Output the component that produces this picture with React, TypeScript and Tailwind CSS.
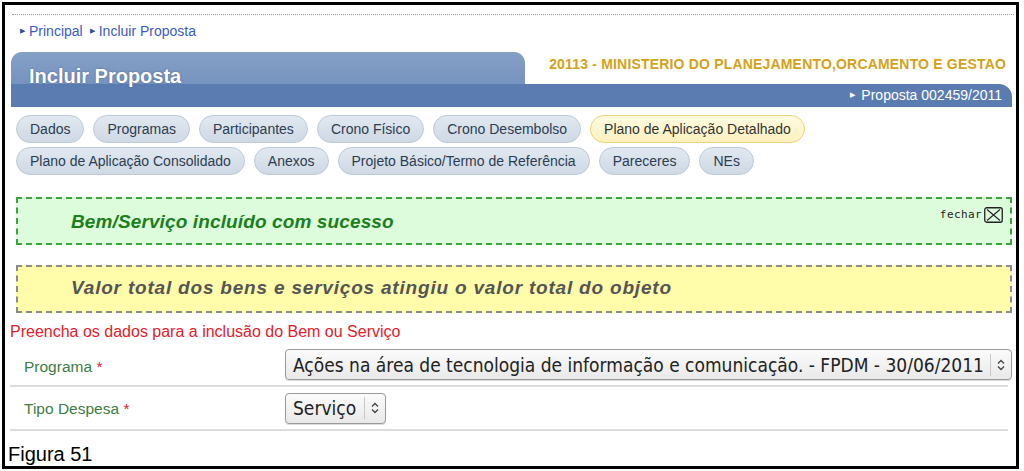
import React from "react";

const tabs1 = ["Dados", "Programas", "Participantes", "Crono Físico", "Crono Desembolso"];
const tabs2 = ["Plano de Aplicação Consolidado", "Anexos", "Projeto Básico/Termo de Referência", "Pareceres", "NEs"];

function Pill({ label, active = false }: { label: string; active?: boolean }) {
  return (
    <div
      className={
        "h-[28px] px-[13px] flex items-center rounded-full border text-[14px] whitespace-nowrap " +
        (active
          ? "bg-[linear-gradient(to_bottom,#fffbe0,#fdf1c0)] border-[#ecd27a] text-[#333]"
          : "bg-[linear-gradient(to_bottom,#e1e8f0,#cfd9e4)] border-[#bccad8] text-[#2b3d52]")
      }
    >
      {label}
    </div>
  );
}

function Arrows() {
  return (
    <svg width="10" height="14" viewBox="0 0 10 14" className="shrink-0">
      <path d="M2 5.5 L5 2.5 L8 5.5" fill="none" stroke="#444" strokeWidth="1.3" />
      <path d="M2 8.5 L5 11.5 L8 8.5" fill="none" stroke="#444" strokeWidth="1.3" />
    </svg>
  );
}

function Select({ text, w }: { text: string; w: string }) {
  return (
    <div
      className={
        "h-[31px] flex items-center rounded-[4px] border border-[#9a9a9a] bg-[linear-gradient(to_bottom,#fbfbfb,#e9e9e9)] shadow-[0_1px_1px_rgba(0,0,0,0.15)] " +
        w
      }
    >
      <span className="pl-[7px] pr-[4px] text-[19px] text-[#222] whitespace-nowrap font-['DejaVu_Sans_Condensed','DejaVu_Sans',sans-serif] flex-1">
        {text}
      </span>
      <div className="h-[22px] border-l border-[#c8c8c8] flex items-center px-[5px]">
        <Arrows />
      </div>
    </div>
  );
}

export default function App() {
  return (
    <div className="w-[1024px] h-[471px] bg-white overflow-hidden pt-[2px] pl-[2px] font-['Liberation_Sans',Arial,sans-serif]">
      <div className="w-[1017px] h-[467px] border-[3px] border-black flex flex-col pl-[5px] pr-[4px]">
        {/* dotted line */}
        <div className="mt-[9px] ml-[2px] mr-[-2px] border-t border-dotted border-[#9a9a9a]" />
        {/* breadcrumb */}
        <div className="mt-[8px] h-[16px] flex items-center pl-[10px] text-[14px] text-[#3b5bc4] gap-[7px]">
          <span className="flex items-center gap-[4px]">
            <span className="text-[7px] text-[#2a4fa8]">▶</span>Principal
          </span>
          <span className="flex items-center gap-[4px]">
            <span className="text-[7px] text-[#2a4fa8]">▶</span>Incluir Proposta
          </span>
        </div>
        {/* header */}
        <div className="mt-[13px] ml-[1px] flex items-end">
          <div className="w-[514px] h-[55px] rounded-t-[11px] bg-[linear-gradient(to_bottom,#86a0c7_0px,#7693bf_32px,#5b7cb1_32px,#5b7cb1_55px)] pl-[18px] pt-[12px]">
            <span className="text-[20px] font-bold text-white leading-[24px] [text-shadow:0_0_2px_rgba(40,60,100,0.6)]">
              Incluir Proposta
            </span>
          </div>
          <div className="flex-1 flex flex-col">
            <div className="h-[32px] flex items-center justify-end pr-[6px] pb-[7px] text-[14px] font-bold text-[#d4a21a] tracking-[0.18px] whitespace-nowrap">
              20113 - MINISTERIO DO PLANEJAMENTO,ORCAMENTO E GESTAO
            </div>
            <div className="h-[23px] bg-[#5b7cb1] rounded-tr-[13px] flex items-center justify-end pr-[10px] text-[14px] text-white">
              <span className="text-[7px] mr-[6px]">▶</span>Proposta 002459/2011
            </div>
          </div>
        </div>
        {/* tabs */}
        <div className="mt-[8px] pl-[6px] flex flex-col gap-[4px]">
          <div className="flex gap-[9px]">
            {tabs1.map((t) => (
              <Pill key={t} label={t} />
            ))}
            <Pill label="Plano de Aplicação Detalhado" active />
          </div>
          <div className="flex gap-[9px]">
            {tabs2.map((t) => (
              <Pill key={t} label={t} />
            ))}
          </div>
        </div>
        {/* success */}
        <div className="mt-[22px] ml-[6px] mr-[0px] h-[48px] border-2 border-dashed border-[#3aa53a] bg-[#dcfcdc] flex items-start pl-[53px]">
          <span className="mt-[9px] text-[19px] font-bold italic text-[#1c7f1c] tracking-[0.12px]">
            Bem/Serviço incluído com sucesso
          </span>
          <div className="ml-auto mr-[7px] mt-[8px] flex items-center gap-[2px]">
            <span className="text-[11px] text-[#222] font-['DejaVu_Sans_Mono',monospace] tracking-[0.4px]">fechar</span>
            <svg width="19" height="16" viewBox="0 0 19 16">
              <rect x="0.75" y="0.75" width="17.5" height="14.5" rx="2" fill="none" stroke="#222" strokeWidth="1.3" />
              <path d="M3 2.5 L16 13.5 M16 2.5 L3 13.5" stroke="#222" strokeWidth="1.1" />
            </svg>
          </div>
        </div>
        {/* warning */}
        <div className="mt-[20px] ml-[6px] mr-[0px] h-[48px] border-2 border-dashed border-[#8c8c8c] bg-[#fffcaa] flex items-center pl-[53px]">
          <span className="text-[19px] font-bold italic text-[#555] tracking-[0.8px] whitespace-nowrap">
            Valor total dos bens e serviços atingiu o valor total do objeto
          </span>
        </div>
        {/* red text */}
        <div className="mt-[11px] h-[16px] flex items-center text-[16px] text-[#e4202c] whitespace-nowrap">
          Preencha os dados para a inclusão do Bem ou Serviço
        </div>
        {/* form rows */}
        <div className="h-[48px] pt-[5px] flex items-center border-b-2 border-[#dcdcdc] mr-[4px]">
          <div className="w-[275px] pl-[14px] pt-[3px] text-[15.5px] text-[#3e7d45]">
            Programa <span className="text-[#e4202c]">*</span>
          </div>
          <div className="mr-[-4px]">
            <Select text="Ações na área de tecnologia de informação e comunicação. - FPDM - 30/06/2011" w="w-[727px]" />
          </div>
        </div>
        <div className="h-[44px] flex items-center border-b-2 border-[#dcdcdc] mr-[4px]">
          <div className="w-[275px] pl-[14px] pt-[1px] text-[15.5px] text-[#3e7d45]">
            Tipo Despesa <span className="text-[#e4202c]">*</span>
          </div>
          <Select text="Serviço" w="w-[101px]" />
        </div>
        <div className="mt-[11px] ml-[-2px] text-[20px] text-black leading-[24px]">Figura 51</div>
      </div>
    </div>
  );
}
